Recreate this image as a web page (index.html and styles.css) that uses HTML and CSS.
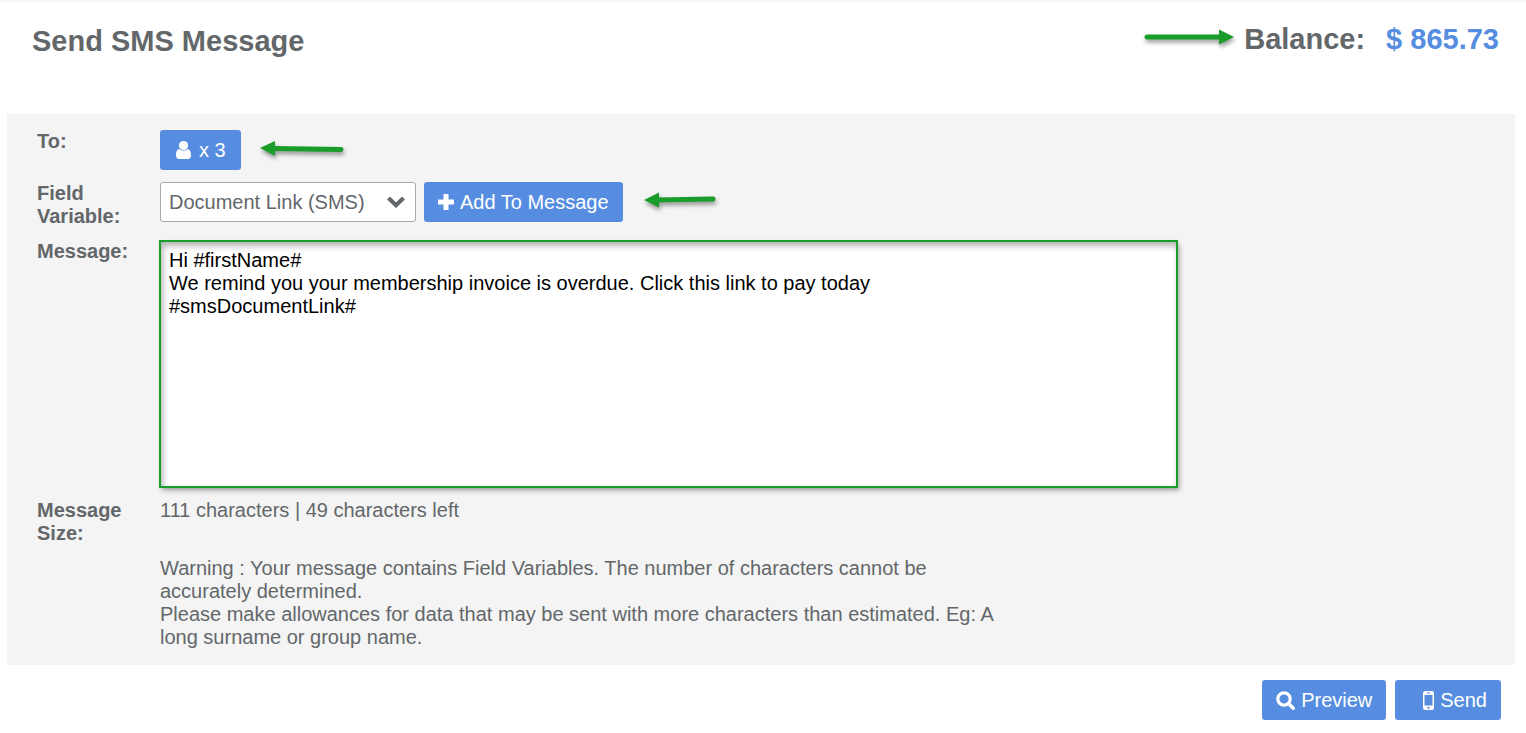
FILE: index.html
```html
<!DOCTYPE html>
<html lang="en">
<head>
    <meta charset="UTF-8">
    <meta name="viewport" content="width=device-width, initial-scale=1.0">
    <title>Send SMS Message</title>
    <link rel="stylesheet" href="styles.css">
</head>
<body>
    <header class="page-header">
        <h1>Send SMS Message</h1>
        <div class="balance">
            <svg class="arrow" width="98" height="24" viewBox="0 0 98 24" aria-hidden="true">
                <path d="M5 12H80" stroke="#1a9c2a" stroke-width="5" stroke-linecap="round"/>
                <path d="M77 4.500L92 12L77 19.500Z" fill="#1a9c2a"/>
            </svg>
            <span>Balance:</span>
            <span class="amount">$ 865.73</span>
        </div>
    </header>

    <form id="smsForm">
        <div class="panel">
            <!-- Recipients -->
            <span class="label">To:</span>
            <div class="field">
                <button type="button" class="btn btn-to" aria-label="3 recipients">
                    <svg width="15" height="18" viewBox="0 0 15 18" aria-hidden="true">
                        <path d="M3.300 8C1 8.300 0 11 0 14.200C0 16.600 1.200 18 3 18H12C13.800 18 15 16.600 15 14.200C15 11 14 8.300 11.700 8C9 10.200 6 10.200 3.300 8Z" fill="#fff"/>
                        <circle cx="7.500" cy="4.600" r="4.600" fill="#fff"/>
                    </svg>
                    x 3
                </button>
                <svg class="arrow" width="100" height="24" viewBox="0 0 100 24" aria-hidden="true">
                    <path d="M24 10.500L92 11.500" stroke="#1a9c2a" stroke-width="5" stroke-linecap="round"/>
                    <path d="M11 10L26 3V18Z" fill="#1a9c2a"/>
                </svg>
            </div>

            <!-- Field variable -->
            <label class="label" for="fieldVariable">Field Variable:</label>
            <div class="field">
                <div class="select-box">
                    <select id="fieldVariable">
                        <option>Document Link (SMS)</option>
                    </select>
                    <svg class="chevron" width="18" height="12" viewBox="0 0 18 12" aria-hidden="true">
                        <path d="M1.500 2L9 9.300L16.500 2" fill="none" stroke="#63676a" stroke-width="4"/>
                    </svg>
                </div>
                <button type="button" class="btn">
                    <svg width="16" height="16" viewBox="0 0 16 16" aria-hidden="true">
                        <path d="M8 0V16M0 8H16" stroke="#fff" stroke-width="5"/>
                    </svg>
                    Add To Message
                </button>
                <svg class="arrow" width="94" height="24" viewBox="0 0 94 24" aria-hidden="true">
                    <path d="M24 10L82 9" stroke="#1a9c2a" stroke-width="5" stroke-linecap="round"/>
                    <path d="M13 10L28 2.500V17.500Z" fill="#1a9c2a"/>
                </svg>
            </div>

            <!-- Message text -->
            <label class="label" for="message">Message:</label>
            <div class="message-box">
                <textarea id="message">Hi #firstName#
We remind you your membership invoice is overdue. Click this link to pay today
#smsDocumentLink#</textarea>
            </div>

            <span class="label">Message Size:</span>
            <div class="info">111 characters | 49 characters left</div>

            <div class="info warning">
                <p>Warning : Your message contains Field Variables. The number of characters cannot be accurately determined.</p>
                <p>Please make allowances for data that may be sent with more characters than estimated. Eg: A long surname or group name.</p>
            </div>
        </div>

        <div class="actions">
            <button type="button" class="btn">
                <svg width="19" height="19" viewBox="0 0 19 19" aria-hidden="true">
                    <circle cx="8" cy="8" r="6.200" fill="none" stroke="#fff" stroke-width="3.200"/>
                    <path d="M12.500 12.500L17.200 17.200" stroke="#fff" stroke-width="3.600" stroke-linecap="round"/>
                </svg>
                Preview
            </button>
            <button type="submit" class="btn btn-send">
                <svg width="11" height="19" viewBox="0 0 11 19" aria-hidden="true">
                    <path fill="#fff" fill-rule="evenodd" d="M2 0H9Q11 0 11 2V17Q11 19 9 19H2Q0 19 0 17V2Q0 0 2 0ZM1.500 4V14.500H9.500V4ZM4 1.600V2.400H7V1.600ZM5.500 15.700A1.100 1.100 0 1 0 5.500 17.900A1.100 1.100 0 1 0 5.500 15.700Z"/>
                </svg>
                Send
            </button>
        </div>
    </form>
</body>
</html>
```
FILE: styles.css
```css
* {
    box-sizing: border-box;
}
body {
    font-family: "Liberation Sans", Arial, sans-serif;
    font-size: 20px;
    line-height: 23px;
    color: #63676a;
    background: linear-gradient(#f4f4f4, #fff 3px) no-repeat #fff;
    margin: 0;
    padding: 0 11px 0 7px;
}
.page-header {
    display: flex;
    justify-content: space-between;
    align-items: flex-start;
    height: 114px;
    padding: 22px 16px 0 25px;
}
h1 {
    font-size: 29px;
    line-height: 38px;
    margin: 0;
}
.balance {
    display: flex;
    align-items: center;
    font-size: 29px;
    font-weight: bold;
    line-height: 34px;
}
.balance .arrow {
    margin: 0 4px 4px 0;
}
.amount {
    color: #568de0;
    margin-left: 21px;
}
.arrow {
    fill: none;
    filter: drop-shadow(1px 3px 2px rgba(0, 0, 0, 0.4));
}
.panel {
    display: grid;
    grid-template-columns: 92px 1fr;
    gap: 12px 31px;
    background-color: #f4f4f4;
    padding: 16px 30px;
}
.label {
    font-weight: bold;
}
.field {
    display: flex;
    align-items: flex-start;
    gap: 8px;
}
.field .arrow {
    margin-top: 8px;
}
.btn {
    display: flex;
    align-items: center;
    gap: 6px;
    height: 40px;
    padding: 0 14px;
    font: inherit;
    color: #fff;
    background-color: #568de0;
    border: none;
    border-radius: 3px;
    cursor: pointer;
}
.btn:hover {
    background-color: #3f79d2;
}
.btn-to {
    gap: 8px;
    padding: 0 15px 0 16px;
}
.btn-send {
    padding-left: 28px;
}
.select-box {
    position: relative;
    width: 256px;
}
select {
    appearance: none;
    width: 100%;
    height: 40px;
    padding: 0 8px;
    font: inherit;
    color: #63676a;
    background-color: #fff;
    border: 1px solid #a6a8ad;
    border-radius: 3px;
}
.chevron {
    position: absolute;
    right: 11px;
    top: 14px;
    pointer-events: none;
}
.message-box {
    display: flex;
    max-width: 1017px;
    padding-top: 1px;
}
textarea {
    width: 100%;
    height: 246px;
    padding: 7px 8px;
    font: inherit;
    color: #000;
    background-color: #fff;
    border: 1px solid #999;
    outline: 2px solid #1a9c2a;
    outline-offset: -1px;
    box-shadow: 2px 3px 5px rgba(0, 0, 0, 0.4), inset 2px 4px 6px rgba(0, 0, 0, 0.3);
    resize: none;
}
.info {
    max-width: 840px;
}
.warning {
    grid-column: 2;
}
.warning p {
    margin: 0;
}
.actions {
    display: flex;
    justify-content: flex-end;
    gap: 9px;
    padding: 15px 14px 13px;
}
```
